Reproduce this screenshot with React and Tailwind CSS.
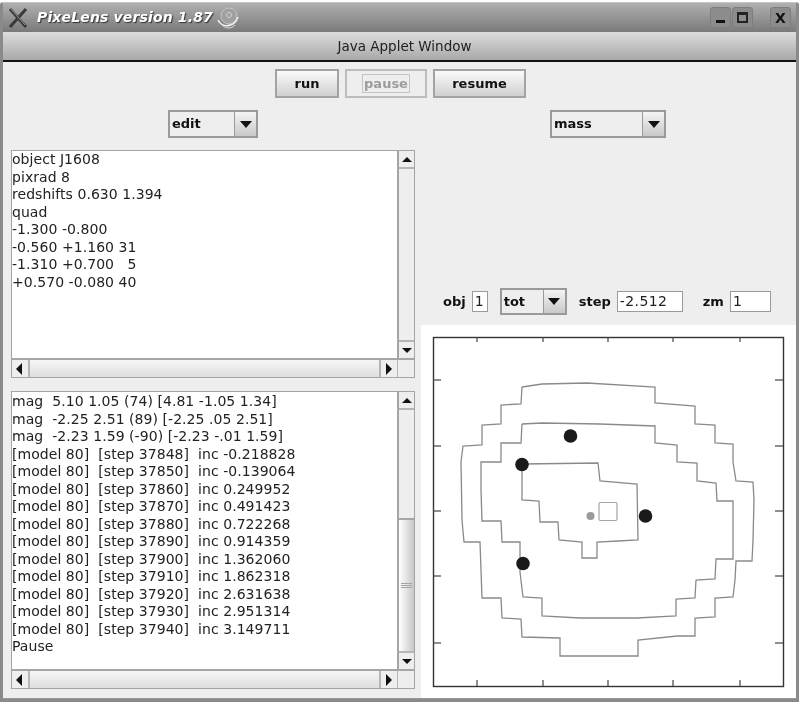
const sans = "font-['DejaVu_Sans',sans-serif]";

const editLines = [
  "object J1608",
  "pixrad 8",
  "redshifts 0.630 1.394",
  "quad",
  "-1.300 -0.800",
  "-0.560 +1.160 31",
  "-1.310 +0.700   5",
  "+0.570 -0.080 40",
];

const logLines = [
  "mag  5.10 1.05 (74) [4.81 -1.05 1.34]",
  "mag  -2.25 2.51 (89) [-2.25 .05 2.51]",
  "mag  -2.23 1.59 (-90) [-2.23 -.01 1.59]",
  "[model 80]  [step 37848]  inc -0.218828",
  "[model 80]  [step 37850]  inc -0.139064",
  "[model 80]  [step 37860]  inc 0.249952",
  "[model 80]  [step 37870]  inc 0.491423",
  "[model 80]  [step 37880]  inc 0.722268",
  "[model 80]  [step 37890]  inc 0.914359",
  "[model 80]  [step 37900]  inc 1.362060",
  "[model 80]  [step 37910]  inc 1.862318",
  "[model 80]  [step 37920]  inc 2.631638",
  "[model 80]  [step 37930]  inc 2.951314",
  "[model 80]  [step 37940]  inc 3.149711",
  "Pause",
];

const outer = "522,387 542,384 587,383 655,387 655,403 695,406 695,424 715,425 715,443 733,444 733,462 736,481 753,482 754,500 753,540 752,561 736,561 735,580 733,597 715,598 715,617 695,618 695,636 677,636 638,640 638,656 560,656 560,638 522,637 521,619 502,618 501,598 482,598 480,542 464,542 462,520 461,462 463,446 482,445 482,425 501,424 501,405 521,404 522,387";
const middle = "522,424 542,423 600,424 655,426 655,443 677,445 677,462 697,463 697,481 716,483 717,501 733,501 733,540 733,559 716,559 715,579 696,580 695,598 676,599 676,616 637,618 580,618 542,616 542,598 523,597 520,572 520,542 502,542 501,521 482,521 481,490 481,462 501,462 501,443 521,443 522,424";
const inner = "522,464 598,463 600,481 637,484 638,540 618,541 597,542 597,558 582,558 582,542 559,540 558,522 540,522 539,501 522,500 522,464";

function Arrow({ dir }) {
  const pts = {
    up: "1,7 11,7 6,2",
    down: "1,2 11,2 6,7",
    left: "8,0 8,12 2,6",
    right: "3,0 3,12 9,6",
  };
  const box = dir === "left" || dir === "right" ? "w-3 h-3" : "w-3 h-[9px]";
  const view = dir === "left" || dir === "right" ? "0 0 12 12" : "0 0 12 9";
  return (
    <svg viewBox={view} className={box}>
      <polygon points={pts[dir]} fill="#111" />
    </svg>
  );
}

function Combo({ label, width, size = "h-[28px]" }) {
  return (
    <div className={`flex ${width} ${size} border-2 border-[#9a9a9a] bg-[#eeeeee]`}>
      <div className="flex-1 flex items-center pl-0.5 text-[13px] font-bold text-[#111]">{label}</div>
      <div className="w-[22px] flex items-center justify-center border-l border-[#9a9a9a] bg-gradient-to-b from-[#f4f4f4] to-[#c9c9c9]">
        <svg viewBox="0 0 12 7" className="w-3 h-[7px]">
          <polygon points="0,0 12,0 6,7" fill="#111" />
        </svg>
      </div>
    </div>
  );
}

function Btn({ label, width, disabled }) {
  return disabled ? (
    <div className={`${width} h-[29px] flex items-center justify-center border-2 border-[#bdbdbd] bg-[#eeeeee] text-[13px] font-bold text-[#9c9c9c]`}>
      <span className="border border-[#c4c4c4] leading-[17px] px-px">{label}</span>
    </div>
  ) : (
    <div className={`${width} h-[29px] flex items-center justify-center border-2 border-[#a3a3a3] bg-gradient-to-b from-[#fbfbfb] to-[#d0d0d0] text-[13px] font-bold text-[#111]`}>
      {label}
    </div>
  );
}

function ScrollText({ lines, height, thumb, pad }) {
  return (
    <div className={`flex flex-col ${height} border border-[#a5a5a5] bg-white`}>
      <div className="flex flex-1 min-h-0">
        <pre className={`flex-1 ${pad} text-[14px] tracking-[0.05px] leading-[17.5px] text-[#222] overflow-hidden ${sans}`}>
          {lines.join("\n")}
        </pre>
        <div className="w-[17px] flex flex-col border-l-2 border-[#a5a5a5] bg-[#eeeeee]">
          <div className="h-[18px] flex items-center justify-center border-b-2 border-[#b5b5b5]">
            <Arrow dir="up" />
          </div>
          {thumb}
          <div className="h-[18px] flex items-center justify-center border-t-2 border-[#b5b5b5]">
            <Arrow dir="down" />
          </div>
        </div>
      </div>
      <div className="h-[19px] flex border-t-2 border-[#a5a5a5] bg-[#eeeeee]">
        <div className="w-[18px] flex items-center justify-center border-r-2 border-[#b5b5b5]">
          <Arrow dir="left" />
        </div>
        <div className="flex-1 bg-gradient-to-b from-[#f6f6f6] to-[#dedede]" />
        <div className="w-[18px] flex items-center justify-center border-l-2 border-[#b5b5b5]">
          <Arrow dir="right" />
        </div>
        <div className="w-[17px] border-l border-[#b5b5b5]" />
      </div>
    </div>
  );
}

function Field({ value, width }) {
  return (
    <div className={`${width} h-[21px] flex items-center border border-[#9a9a9a] bg-white pl-[2px] text-[14px] font-normal tracking-[0.4px] text-[#222]`}>
      {value}
    </div>
  );
}

function Plot() {
  const xs = [477, 543, 608, 673, 740];
  const ys = [380, 446, 511, 576, 643];
  return (
    <svg viewBox="421 325 374 373" className="w-[374px] h-[373px] block">
      <rect x="433.5" y="337.5" width="350" height="349" fill="none" stroke="#333" strokeWidth="1.4" />
      {xs.map((x) => (
        <g key={x} stroke="#444" strokeWidth="1.2">
          <line x1={x} y1="337" x2={x} y2="342" />
          <line x1={x} y1="686" x2={x} y2="680" />
        </g>
      ))}
      {ys.map((y) => (
        <g key={y} stroke="#444" strokeWidth="1.2">
          <line x1="433" y1={y} x2="441" y2={y} />
          <line x1="783" y1={y} x2="775" y2={y} />
        </g>
      ))}
      <polyline points={outer} fill="none" stroke="#8a8a8a" strokeWidth="1.3" />
      <polyline points={middle} fill="none" stroke="#8a8a8a" strokeWidth="1.3" />
      <polyline points={inner} fill="none" stroke="#8a8a8a" strokeWidth="1.3" />
      <rect x="599" y="502.5" width="18" height="18" rx="1.5" fill="none" stroke="#a5a5a5" strokeWidth="1.2" />
      <circle cx="590.5" cy="516" r="4" fill="#999" />
      <circle cx="570.5" cy="436" r="6.8" fill="#1a1a1a" />
      <circle cx="522" cy="464.5" r="6.8" fill="#1a1a1a" />
      <circle cx="645.5" cy="516" r="6.8" fill="#1a1a1a" />
      <circle cx="523" cy="563.5" r="6.8" fill="#1a1a1a" />
    </svg>
  );
}

function WinBtn({ children }) {
  return (
    <div className="w-[21px] h-[21px] flex items-center justify-center rounded-[3px] bg-[#8c8c8c] border border-[#7d7d7d]">
      {children}
    </div>
  );
}

export default function App() {
  return (
    <div className={`w-[799px] h-[702px] overflow-hidden bg-white text-[#111] pt-[2px] blur-[0.5px] ${sans}`}>
      <div className="h-full flex flex-col border-x-[3px] border-b-[3px] border-t border-[#8a8a8a] border-t-[#c4c4c4] rounded-t-[3px]">
        {/* window title bar */}
        <div className="h-[29px] flex items-center bg-gradient-to-b from-[#b0b0b0] to-[#7a7a7a]">
          <svg viewBox="0 0 20 20" className="ml-[5px] w-5 h-5">
            <path d="M2 1 L18 19 M18 1 L2 19" stroke="#3a3a3a" strokeWidth="3" />
            <path d="M3 1 L17 17" stroke="#aaa" strokeWidth="0.8" />
          </svg>
          <span className="ml-[9px] text-[14px] font-bold italic text-white tracking-[0.15px] [text-shadow:1px_1px_1px_#333]">
            PixeLens version 1.87
          </span>
          <svg viewBox="0 0 24 24" className="ml-[3px] w-6 h-6">
            <circle cx="13" cy="10" r="8" fill="#a0a0a0" stroke="#c4c4c4" strokeWidth="1" />
            <circle cx="13" cy="9" r="2.5" fill="none" stroke="#d0d0d0" />
            <path d="M2 14 C6 22 18 22 22 11" fill="none" stroke="#f0f0f0" strokeWidth="1.6" />
            <path d="M6 19 C10 23 15 23 19 19" fill="none" stroke="#dddddd" />
          </svg>
          <div className="ml-auto flex items-center mr-[5px]">
            <WinBtn>
              <div className="w-[9px] h-[3px] bg-[#111] mt-2" />
            </WinBtn>
            <div className="ml-px">
              <WinBtn>
                <div className="w-[11px] h-[11px] border-2 border-t-[3px] border-[#222]" />
              </WinBtn>
            </div>
            <div className="ml-[17px]">
              <WinBtn>
                <span className="text-[14px] font-bold text-[#111] leading-none">X</span>
              </WinBtn>
            </div>
          </div>
        </div>

        {/* applet banner */}
        <div className="h-[30px] flex items-center justify-center pl-[10px] bg-gradient-to-b from-[#dddddd] to-[#a9a9a9] border-b-2 border-[#111] text-[13.5px] text-[#222]">
          Java Applet Window
        </div>

        {/* applet body */}
        <div className="flex-1 min-h-0 flex flex-col bg-[#eeeeee] border-b border-[#999999]">
          <div className="pt-[7px] flex justify-center gap-[6px] pl-[2px]">
            <Btn label="run" width="w-[64px]" />
            <Btn label="pause" width="w-[82px]" disabled />
            <Btn label="resume" width="w-[93px]" />
          </div>

          <div className="flex-1 min-h-0 flex pt-[12px]">
            <div className="w-[418px] flex flex-col">
              <div className="pl-[165px]">
                <Combo label="edit" width="w-[90px]" />
              </div>
              <div className="pl-[8px] pr-[6px] pt-[12px] flex flex-col gap-[13px]">
                <ScrollText
                  lines={editLines}
                  height="h-[228px]"
                  pad="pl-0 pt-0"
                  thumb={<div className="flex-1 bg-[#eeeeee]" />}
                />
                <ScrollText
                  lines={logLines}
                  height="h-[298px]"
                  pad="pl-0 pt-px"
                  thumb={
                    <div className="flex-1 flex flex-col">
                      <div className="h-[110px] border-b-2 border-[#a5a5a5]" />
                      <div className="flex-1 flex flex-col items-center justify-center gap-[1px] bg-gradient-to-r from-white to-[#c8c8c8]">
                        <div className="w-[11px] h-px bg-[#a5a5a5]" />
                        <div className="w-[11px] h-px bg-[#a5a5a5]" />
                        <div className="w-[11px] h-px bg-[#a5a5a5]" />
                      </div>
                    </div>
                  }
                />
              </div>
            </div>

            <div className="flex-1 flex flex-col">
              <div className="pl-[129px]">
                <Combo label="mass" width="w-[116px]" />
              </div>
              <div className="flex-1 flex items-end pb-[10px] pl-[22px] text-[13px] font-bold">
                <div className="flex items-center">
                  <span>obj</span>
                  <div className="ml-[6px]"><Field value="1" width="w-[16px]" /></div>
                  <div className="ml-[12px]"><Combo label="tot" width="w-[67px]" size="h-[27px]" /></div>
                  <span className="ml-[12px]">step</span>
                  <div className="ml-[6px]"><Field value="-2.512" width="w-[66px]" /></div>
                  <span className="ml-[20px]">zm</span>
                  <div className="ml-[6px]"><Field value="1" width="w-[41px]" /></div>
                </div>
              </div>
              <div className="h-[373px] bg-white">
                <Plot />
              </div>
            </div>
          </div>
        </div>
      </div>
    </div>
  );
}
